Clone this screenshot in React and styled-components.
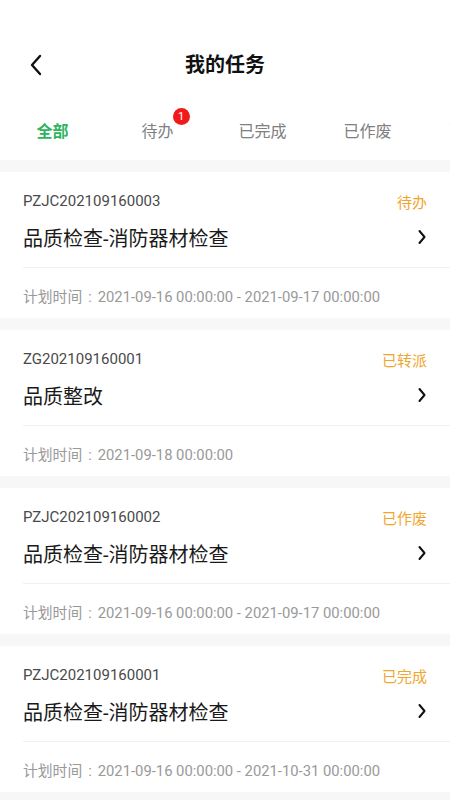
import styled, { createGlobalStyle } from "styled-components";

const GlobalStyle = createGlobalStyle`
  * { box-sizing: border-box; }
  html, body { margin: 0; padding: 0; background: #ffffff; }
  body {
    font-family: Roboto, "Noto Sans CJK SC", "Noto Sans", sans-serif;
    -webkit-font-smoothing: antialiased;
  }
`;

const Page = styled.div`
  width: 450px;
  height: 800px;
  overflow: hidden;
  background: #f7f7f7;
`;

const TopBar = styled.div`
  height: 90px;
  padding-top: 40px;
  background: #fff;
  display: flex;
  align-items: center;
  position: relative;
`;

const BackButton = styled.div`
  position: absolute;
  left: 26px;
  top: 52px;
  width: 20px;
  height: 26px;
  display: flex;
  align-items: center;
  justify-content: center;
`;

const Title = styled.h1`
  flex: 1;
  margin: 0;
  text-align: center;
  font-size: 20px;
  font-weight: 700;
  color: #111;
  line-height: 50px;
`;

const Tabs = styled.div`
  height: 70px;
  background: #fff;
  display: flex;
  overflow: hidden;
  padding-top: 10px;
  align-items: center;
`;

const Tab = styled.div`
  flex: 0 0 105px;
  text-align: center;
  font-size: 16px;
  color: ${({ active }) => (active ? "#2db55d" : "#808080")};
  font-weight: ${({ active }) => (active ? 700 : 400)};
  position: relative;
  white-space: nowrap;
`;

const TabLabel = styled.span`
  position: relative;
`;

const Badge = styled.span`
  position: absolute;
  top: -14px;
  right: -16px;
  width: 17px;
  height: 17px;
  border-radius: 50%;
  background: #f01a1a;
  color: #fff;
  font-size: 11px;
  line-height: 17px;
  text-align: center;
  font-weight: 400;
`;

const List = styled.div`
  padding-top: 12px;
  display: flex;
  flex-direction: column;
  gap: 12px;
`;

const Card = styled.div`
  background: #fff;
  padding-left: 23px;
  height: 146px;
`;

const Top = styled.div`
  padding-right: 23px;
  padding-top: 19px;
  height: 96px;
  border-bottom: 1px solid #f0f0f0;
`;

const MetaRow = styled.div`
  display: flex;
  justify-content: space-between;
  align-items: center;
  height: 20px;
`;

const Code = styled.span`
  font-size: 15px;
  color: #4a4a4a;
`;

const Status = styled.span`
  font-size: 15px;
  color: #f0a62c;
`;

const NameRow = styled.div`
  display: flex;
  justify-content: space-between;
  align-items: center;
  height: 30px;
  margin-top: 11px;
`;

const Name = styled.span`
  font-size: 20px;
  color: #1a1a1a;
`;

const PlanTime = styled.div`
  font-size: 14.8px;
  color: #999;
  line-height: 20px;
  padding-top: 19px;
  white-space: nowrap;
`;

const Colon = styled.span`
  display: inline-block;
  width: 1.05em;
  text-align: center;
`;

const Chevron = ({ dir = "right" }) => (
  <svg
    width={dir === "left" ? 14 : 10}
    height={dir === "left" ? 22 : 16}
    viewBox={dir === "left" ? "0 0 14 22" : "0 0 10 16"}
    fill="none"
    stroke="#111"
    strokeWidth={dir === "left" ? 2.4 : 2}
    strokeLinecap="round"
    strokeLinejoin="round"
  >
    {dir === "left" ? (
      <path d="M11 2 L3 11 L11 20" />
    ) : (
      <path d="M2.5 2 L7.5 8 L2.5 14" />
    )}
  </svg>
);

const tabs = [
  { label: "全部", active: true },
  { label: "待办", badge: 1 },
  { label: "已完成" },
  { label: "已作废" },
  { label: "已转派" },
];

const tasks = [
  {
    code: "PZJC202109160003",
    status: "待办",
    name: "品质检查-消防器材检查",
    time: "2021-09-16 00:00:00 - 2021-09-17 00:00:00",
  },
  {
    code: "ZG202109160001",
    status: "已转派",
    name: "品质整改",
    time: "2021-09-18 00:00:00",
  },
  {
    code: "PZJC202109160002",
    status: "已作废",
    name: "品质检查-消防器材检查",
    time: "2021-09-16 00:00:00 - 2021-09-17 00:00:00",
  },
  {
    code: "PZJC202109160001",
    status: "已完成",
    name: "品质检查-消防器材检查",
    time: "2021-09-16 00:00:00 - 2021-10-31 00:00:00",
  },
];

export default function App() {
  return (
    <Page>
      <GlobalStyle />
      <TopBar>
        <BackButton>
          <Chevron dir="left" />
        </BackButton>
        <Title>我的任务</Title>
      </TopBar>
      <Tabs>
        {tabs.map((t) => (
          <Tab key={t.label} active={t.active}>
            <TabLabel>
              {t.label}
              {t.badge && <Badge>{t.badge}</Badge>}
            </TabLabel>
          </Tab>
        ))}
      </Tabs>
      <List>
        {tasks.map((task) => (
          <Card key={task.code}>
            <Top>
              <MetaRow>
                <Code>{task.code}</Code>
                <Status>{task.status}</Status>
              </MetaRow>
              <NameRow>
                <Name>{task.name}</Name>
                <Chevron />
              </NameRow>
            </Top>
            <PlanTime>
              计划时间<Colon>:</Colon>
              {task.time}
            </PlanTime>
          </Card>
        ))}
      </List>
    </Page>
  );
}
